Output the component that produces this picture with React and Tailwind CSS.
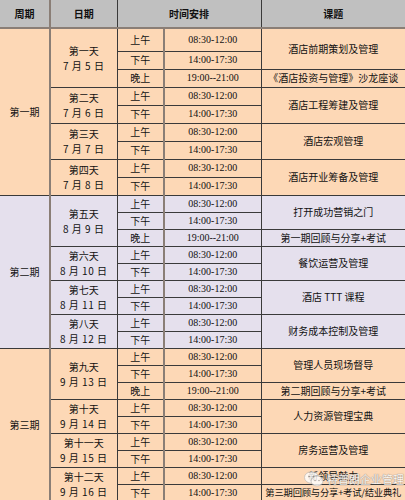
import React from "react";

const TIMES = { 上午: "08:30-12:00", 下午: "14:00-17:30", 晚上: "19:00--21:00" };

const PERIODS = [
  {
    name: "第一期",
    bg: "bg-[#fdd8b6]",
    rowH: ["h-[23px]", "h-[18px]"],
    days: [
      { day: "第一天", date: "7 月 5 日", slots: ["上午", "下午", "晚上"], topics: [["酒店前期策划及管理", 2], ["《酒店投资与管理》沙龙座谈", 1]] },
      { day: "第二天", date: "7 月 6 日", slots: ["上午", "下午"], topics: [["酒店工程筹建及管理", 2]] },
      { day: "第三天", date: "7 月 7 日", slots: ["上午", "下午"], topics: [["酒店宏观管理", 2]] },
      { day: "第四天", date: "7 月 8 日", slots: ["上午", "下午"], topics: [["酒店开业筹备及管理", 2]] },
    ],
  },
  {
    name: "第二期",
    bg: "bg-[#e5e0ed]",
    rowH: ["h-[17px]", "h-[17px]"],
    days: [
      { day: "第五天", date: "8 月 9 日", slots: ["上午", "下午", "晚上"], topics: [["打开成功营销之门", 2], ["第一期回顾与分享+考试", 1]] },
      { day: "第六天", date: "8 月 10 日", slots: ["上午", "下午"], topics: [["餐饮运营及管理", 2]] },
      { day: "第七天", date: "8 月 11 日", slots: ["上午", "下午"], topics: [["酒店 TTT 课程", 2]] },
      { day: "第八天", date: "8 月 12 日", slots: ["上午", "下午"], topics: [["财务成本控制及管理", 2]] },
    ],
  },
  {
    name: "第三期",
    bg: "bg-[#fdd8b6]",
    rowH: ["h-[17px]", "h-[17px]"],
    days: [
      { day: "第九天", date: "9 月 13 日", slots: ["上午", "下午", "晚上"], topics: [["管理人员现场督导", 2], ["第二期回顾与分享+考试", 1]] },
      { day: "第十天", date: "9 月 14 日", slots: ["上午", "下午"], topics: [["人力资源管理宝典", 2]] },
      { day: "第十一天", date: "9 月 15 日", slots: ["上午", "下午"], topics: [["房务运营及管理", 2]] },
      { day: "第十二天", date: "9 月 16 日", slots: ["上午", "下午"], topics: [["新领导魅力", 1], ["第三期回顾与分享+考试/结业典礼", 1, true]] },
    ],
  },
];

const cjk = "font-['SimSun','Noto_Sans_CJK_SC',sans-serif]";
const cell = "border border-[#3a3a3a] p-0 text-center align-middle leading-none";

function renderPeriod(p, pi) {
  const total = p.days.reduce((n, d) => n + d.slots.length, 0);
  const rows = [];
  let first = true;
  p.days.forEach((d, di) => {
    const starts = {};
    let at = 0;
    d.topics.forEach(([text, span, tight]) => {
      starts[at] = { text, span, tight };
      at += span;
    });
    d.slots.forEach((slot, si) => {
      const h = first ? p.rowH[0] : p.rowH[1];
      const t = starts[si];
      rows.push(
        <tr key={`${pi}-${di}-${si}`} className={`${p.bg} ${h}`}>
          {first && (
            <td rowSpan={total} className={`${cell} border-r-2 border-r-[#8a7e76] border-l-0 text-[10px]`}>
              {p.name}
            </td>
          )}
          {si === 0 && (
            <td rowSpan={d.slots.length} className={`${cell} text-[10px]`}>
              <div className="leading-[15px]">{d.day}</div>
              <div className="leading-[15px] tracking-[0.5px]">{d.date}</div>
            </td>
          )}
          <td className={`${cell} border-r-2 border-r-[#8a7e76] text-[10px]`}>{slot}</td>
          <td className={`${cell} font-['Liberation_Serif',serif] text-[10px]`}>{TIMES[slot]}</td>
          {t && (
            <td
              rowSpan={t.span}
              className={`${cell} border-r-0 whitespace-nowrap ${t.tight ? "text-[9.3px] tracking-[-0.2px]" : "text-[10px]"}`}
            >
              {t.text}
            </td>
          )}
        </tr>
      );
      first = false;
    });
  });
  return rows;
}

export default function App() {
  return (
    <div className={`relative w-[405px] h-[500px] overflow-hidden bg-white text-[#111] ${cjk}`}>
      <table className="w-[405px] table-fixed border-collapse">
        <colgroup>
          <col className="w-[50px]" />
          <col className="w-[67px]" />
          <col className="w-[47px]" />
          <col className="w-[97px]" />
          <col className="w-[144px]" />
        </colgroup>
        <thead>
          <tr className="h-[28px] bg-[#c0c0c0] font-bold text-[10px]">
            <th className={`${cell} border-t-0 border-l-0 border-r-2 border-r-[#8a7e76] border-b-2 border-b-[#8a7e76]`}>周期</th>
            <th className={`${cell} border-t-0 border-b-2 border-b-[#8a7e76]`}>日期</th>
            <th colSpan={2} className={`${cell} border-t-0 border-b-2 border-b-[#8a7e76]`}>时间安排</th>
            <th className={`${cell} border-t-0 border-r-0 border-b-2 border-b-[#8a7e76]`}>课题</th>
          </tr>
        </thead>
        <tbody>{PERIODS.map((p, i) => renderPeriod(p, i))}</tbody>
      </table>

      <div className="absolute left-[304px] top-[471px] flex items-center gap-[3px] opacity-80">
        <svg width="20" height="16" viewBox="0 0 20 16">
          <ellipse cx="7.5" cy="6.5" rx="7" ry="5.8" fill="#ffffff" stroke="#b8b8b8" strokeWidth="0.8" />
          <ellipse cx="13" cy="10" rx="6" ry="5" fill="#ffffff" stroke="#b8b8b8" strokeWidth="0.8" />
          <circle cx="5" cy="5.5" r="0.9" fill="#9a9a9a" />
          <circle cx="9.5" cy="5.5" r="0.9" fill="#9a9a9a" />
          <circle cx="11" cy="9.5" r="0.8" fill="#9a9a9a" />
          <circle cx="15" cy="9.5" r="0.8" fill="#9a9a9a" />
        </svg>
        <span className="text-[11px] text-white [text-shadow:0_0_1px_#777,0_0_1px_#777] leading-none">特普朗企业管理</span>
      </div>
    </div>
  );
}
